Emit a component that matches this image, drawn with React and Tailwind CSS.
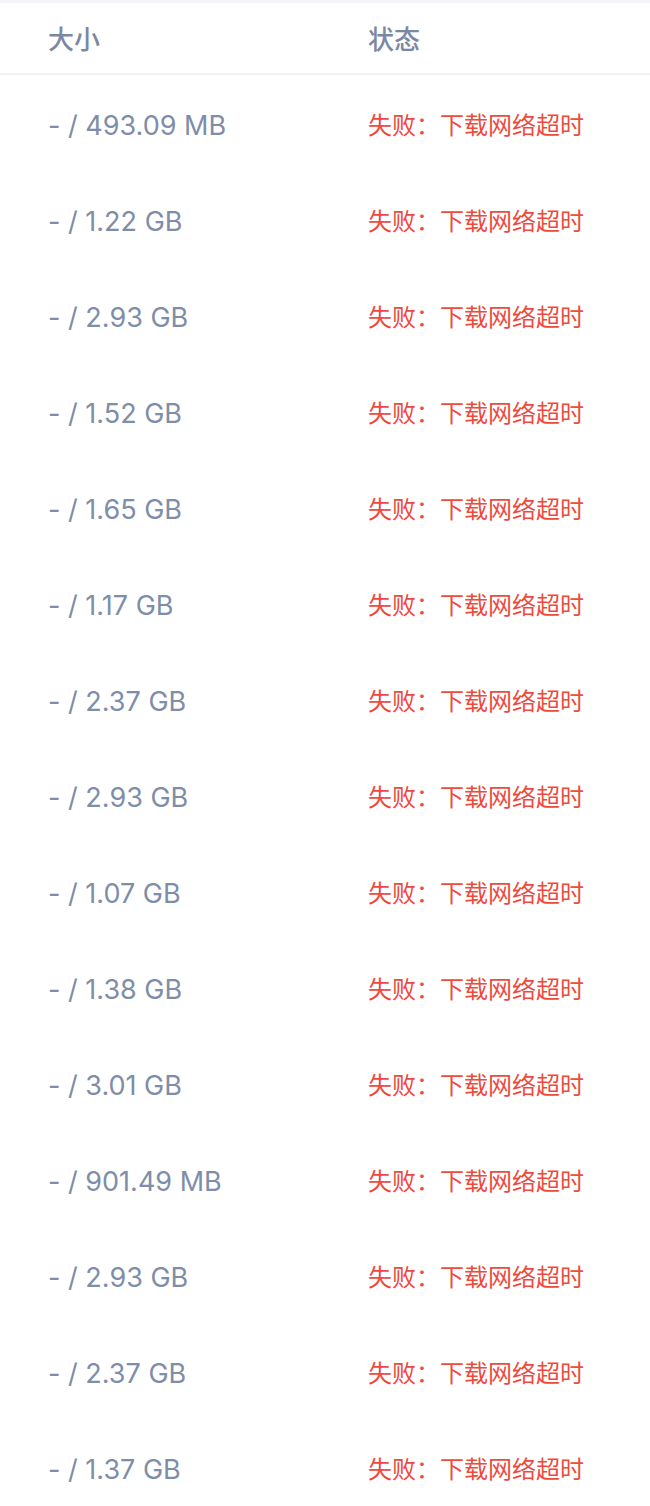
const rows = [
  "493.09 MB",
  "1.22 GB",
  "2.93 GB",
  "1.52 GB",
  "1.65 GB",
  "1.17 GB",
  "2.37 GB",
  "2.93 GB",
  "1.07 GB",
  "1.38 GB",
  "3.01 GB",
  "901.49 MB",
  "2.93 GB",
  "2.37 GB",
  "1.37 GB",
];

export default function App() {
  return (
    <div
      className="w-[650px] bg-white border-t-[3px] border-[#f3f4f8]"
      style={{ fontFamily: '"Liberation Sans", "Noto Sans CJK SC", sans-serif' }}
    >
      <div className="flex h-[72px] items-center pt-[4px] border-b-2 border-[#f1f2f6] text-[26px] font-medium text-[#7a88a3]">
        <div className="w-[368px] pl-[48px]">大小</div>
        <div className="flex-1">状态</div>
      </div>
      {rows.map((r, i) => (
        <div key={i} className="flex h-[96px] items-center pt-[5px]">
          <div
            className="w-[368px] pl-[48px] pt-[2px] text-[27px] text-[#7e8da8]"
            style={{ fontFamily: 'Inter, "Liberation Sans", sans-serif' }}
          >
            - / {r}
          </div>
          <div className="flex-1 text-[24px] text-[#ee4a3d]">失败：下载网络超时</div>
        </div>
      ))}
    </div>
  );
}
